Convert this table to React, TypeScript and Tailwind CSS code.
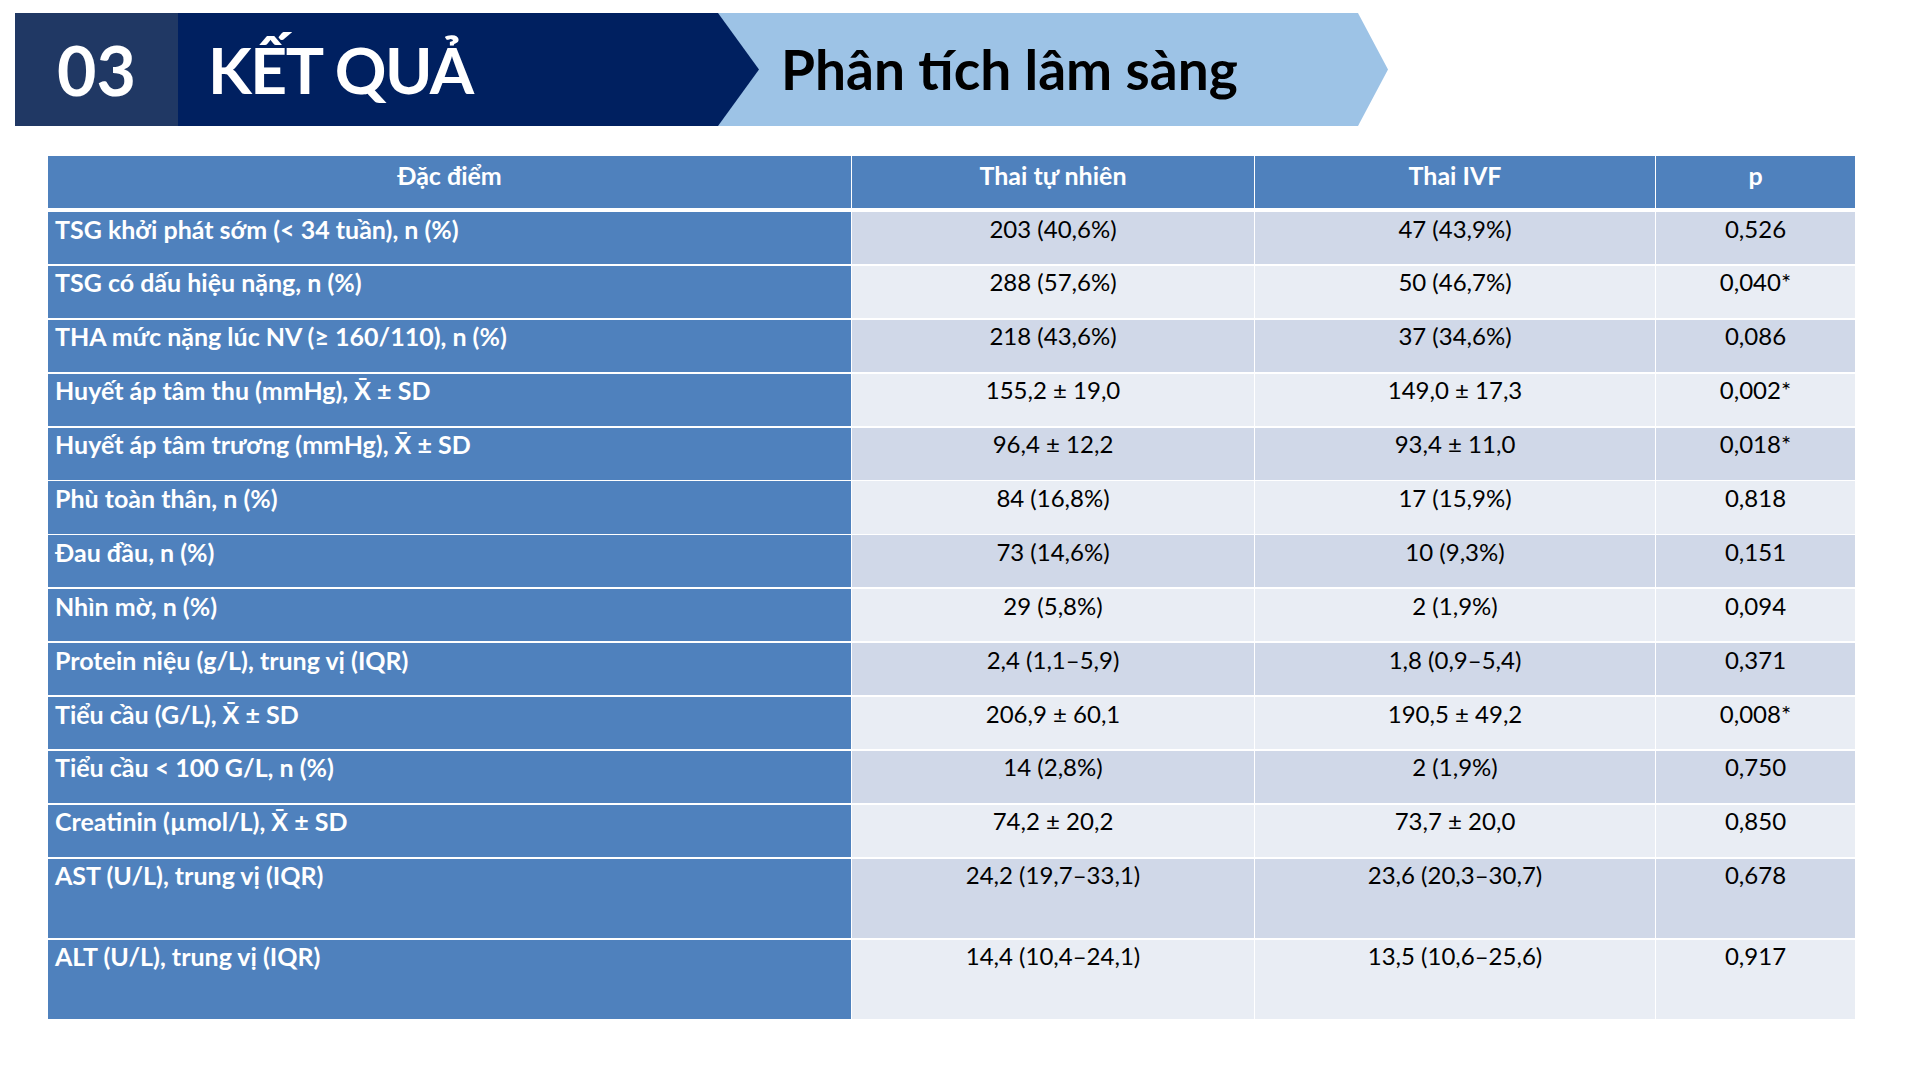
import React from 'react';

type Row = {
  label: string;
  natural: string;
  ivf: string;
  p: string;
  tall?: boolean;
};

const ROWS: Row[] = [
  { label: 'TSG khởi phát sớm (< 34 tuần), n (%)', natural: '203 (40,6%)', ivf: '47 (43,9%)', p: '0,526' },
  { label: 'TSG có dấu hiệu nặng, n (%)', natural: '288 (57,6%)', ivf: '50 (46,7%)', p: '0,040*' },
  { label: 'THA mức nặng lúc NV (≥ 160/110), n (%)', natural: '218 (43,6%)', ivf: '37 (34,6%)', p: '0,086' },
  { label: 'Huyết áp tâm thu (mmHg), X̄ ± SD', natural: '155,2 ± 19,0', ivf: '149,0 ± 17,3', p: '0,002*' },
  { label: 'Huyết áp tâm trương (mmHg), X̄ ± SD', natural: '96,4 ± 12,2', ivf: '93,4 ± 11,0', p: '0,018*' },
  { label: 'Phù toàn thân, n (%)', natural: '84 (16,8%)', ivf: '17 (15,9%)', p: '0,818' },
  { label: 'Đau đầu, n (%)', natural: '73 (14,6%)', ivf: '10 (9,3%)', p: '0,151' },
  { label: 'Nhìn mờ, n (%)', natural: '29 (5,8%)', ivf: '2 (1,9%)', p: '0,094' },
  { label: 'Protein niệu (g/L), trung vị (IQR)', natural: '2,4 (1,1–5,9)', ivf: '1,8 (0,9–5,4)', p: '0,371' },
  { label: 'Tiểu cầu (G/L), X̄ ± SD', natural: '206,9 ± 60,1', ivf: '190,5 ± 49,2', p: '0,008*' },
  { label: 'Tiểu cầu < 100 G/L, n (%)', natural: '14 (2,8%)', ivf: '2 (1,9%)', p: '0,750' },
  { label: 'Creatinin (µmol/L), X̄ ± SD', natural: '74,2 ± 20,2', ivf: '73,7 ± 20,0', p: '0,850' },
  { label: 'AST (U/L), trung vị (IQR)', natural: '24,2 (19,7–33,1)', ivf: '23,6 (20,3–30,7)', p: '0,678', tall: true },
  { label: 'ALT (U/L), trung vị (IQR)', natural: '14,4 (10,4–24,1)', ivf: '13,5 (10,6–25,6)', p: '0,917', tall: true },
];

const FONT = "font-['Lato','Noto_Sans',sans-serif]";

function Header() {
  return (
    <div className="flex h-[113px] mt-[13px] ml-[15px]">
      <div className="w-[163px] h-full bg-[#203864] flex items-center justify-center">
        <span className="text-white font-bold text-[68px] leading-none">03</span>
      </div>
      <div className="relative z-10 w-[581px] h-full bg-[#002060] flex items-center pl-[30px] [clip-path:polygon(0_0,540px_0,100%_50%,540px_100%,0_100%)]">
        <span className="text-white font-bold text-[64px] leading-none tracking-[-1.5px]">KẾT QUẢ</span>
      </div>
      <div className="-ml-[41px] w-[670px] h-full bg-[#9dc3e6] flex items-center pl-[63px] [clip-path:polygon(0_0,640px_0,100%_50%,640px_100%,0_100%)]">
        <span className="text-black font-bold text-[55px] leading-none">Phân tích lâm sàng</span>
      </div>
    </div>
  );
}

function ResultTable() {
  return (
    <div className="ml-[48px] mt-[30px] w-[1807px] grid grid-cols-[803px_402px_400px_199px] gap-x-px bg-white">
      <div className="h-[52px] bg-[#4f81bd] text-white font-bold text-[25px] text-center pt-[1px]">Đặc điểm</div>
      <div className="h-[52px] bg-[#4f81bd] text-white font-bold text-[25px] text-center pt-[1px]">Thai tự nhiên</div>
      <div className="h-[52px] bg-[#4f81bd] text-white font-bold text-[25px] text-center pt-[1px]">Thai IVF</div>
      <div className="h-[52px] bg-[#4f81bd] text-white font-bold text-[25px] text-center pt-[1px]">p</div>
      <div className="col-span-4 h-[4px]" />
      {ROWS.map((row, i) => {
        const shade = i % 2 === 0 ? 'bg-[#d0d8e8]' : 'bg-[#e9edf4]';
        const height = row.tall ? 'h-[79.2px]' : 'h-[52.1px]';
        const gap = i === ROWS.length - 1 ? '' : 'mb-[1.8px]';
        return (
          <React.Fragment key={row.label}>
            <div className={`${height} ${gap} bg-[#4f81bd] text-white font-bold text-[25px] leading-[1.05] pl-[7px] pt-[3.5px]`}>{row.label}</div>
            <div className={`${height} ${gap} ${shade} text-black text-[24px] leading-[1.05] text-center pt-[3.5px]`}>{row.natural}</div>
            <div className={`${height} ${gap} ${shade} text-black text-[24px] leading-[1.05] text-center pt-[3.5px]`}>{row.ivf}</div>
            <div className={`${height} ${gap} ${shade} text-black text-[24px] leading-[1.05] text-center pt-[3.5px]`}>{row.p}</div>
          </React.Fragment>
        );
      })}
    </div>
  );
}

export default function App() {
  return (
    <div className={`w-[1920px] h-[1080px] bg-white overflow-hidden ${FONT}`}>
      <Header />
      <ResultTable />
    </div>
  );
}
